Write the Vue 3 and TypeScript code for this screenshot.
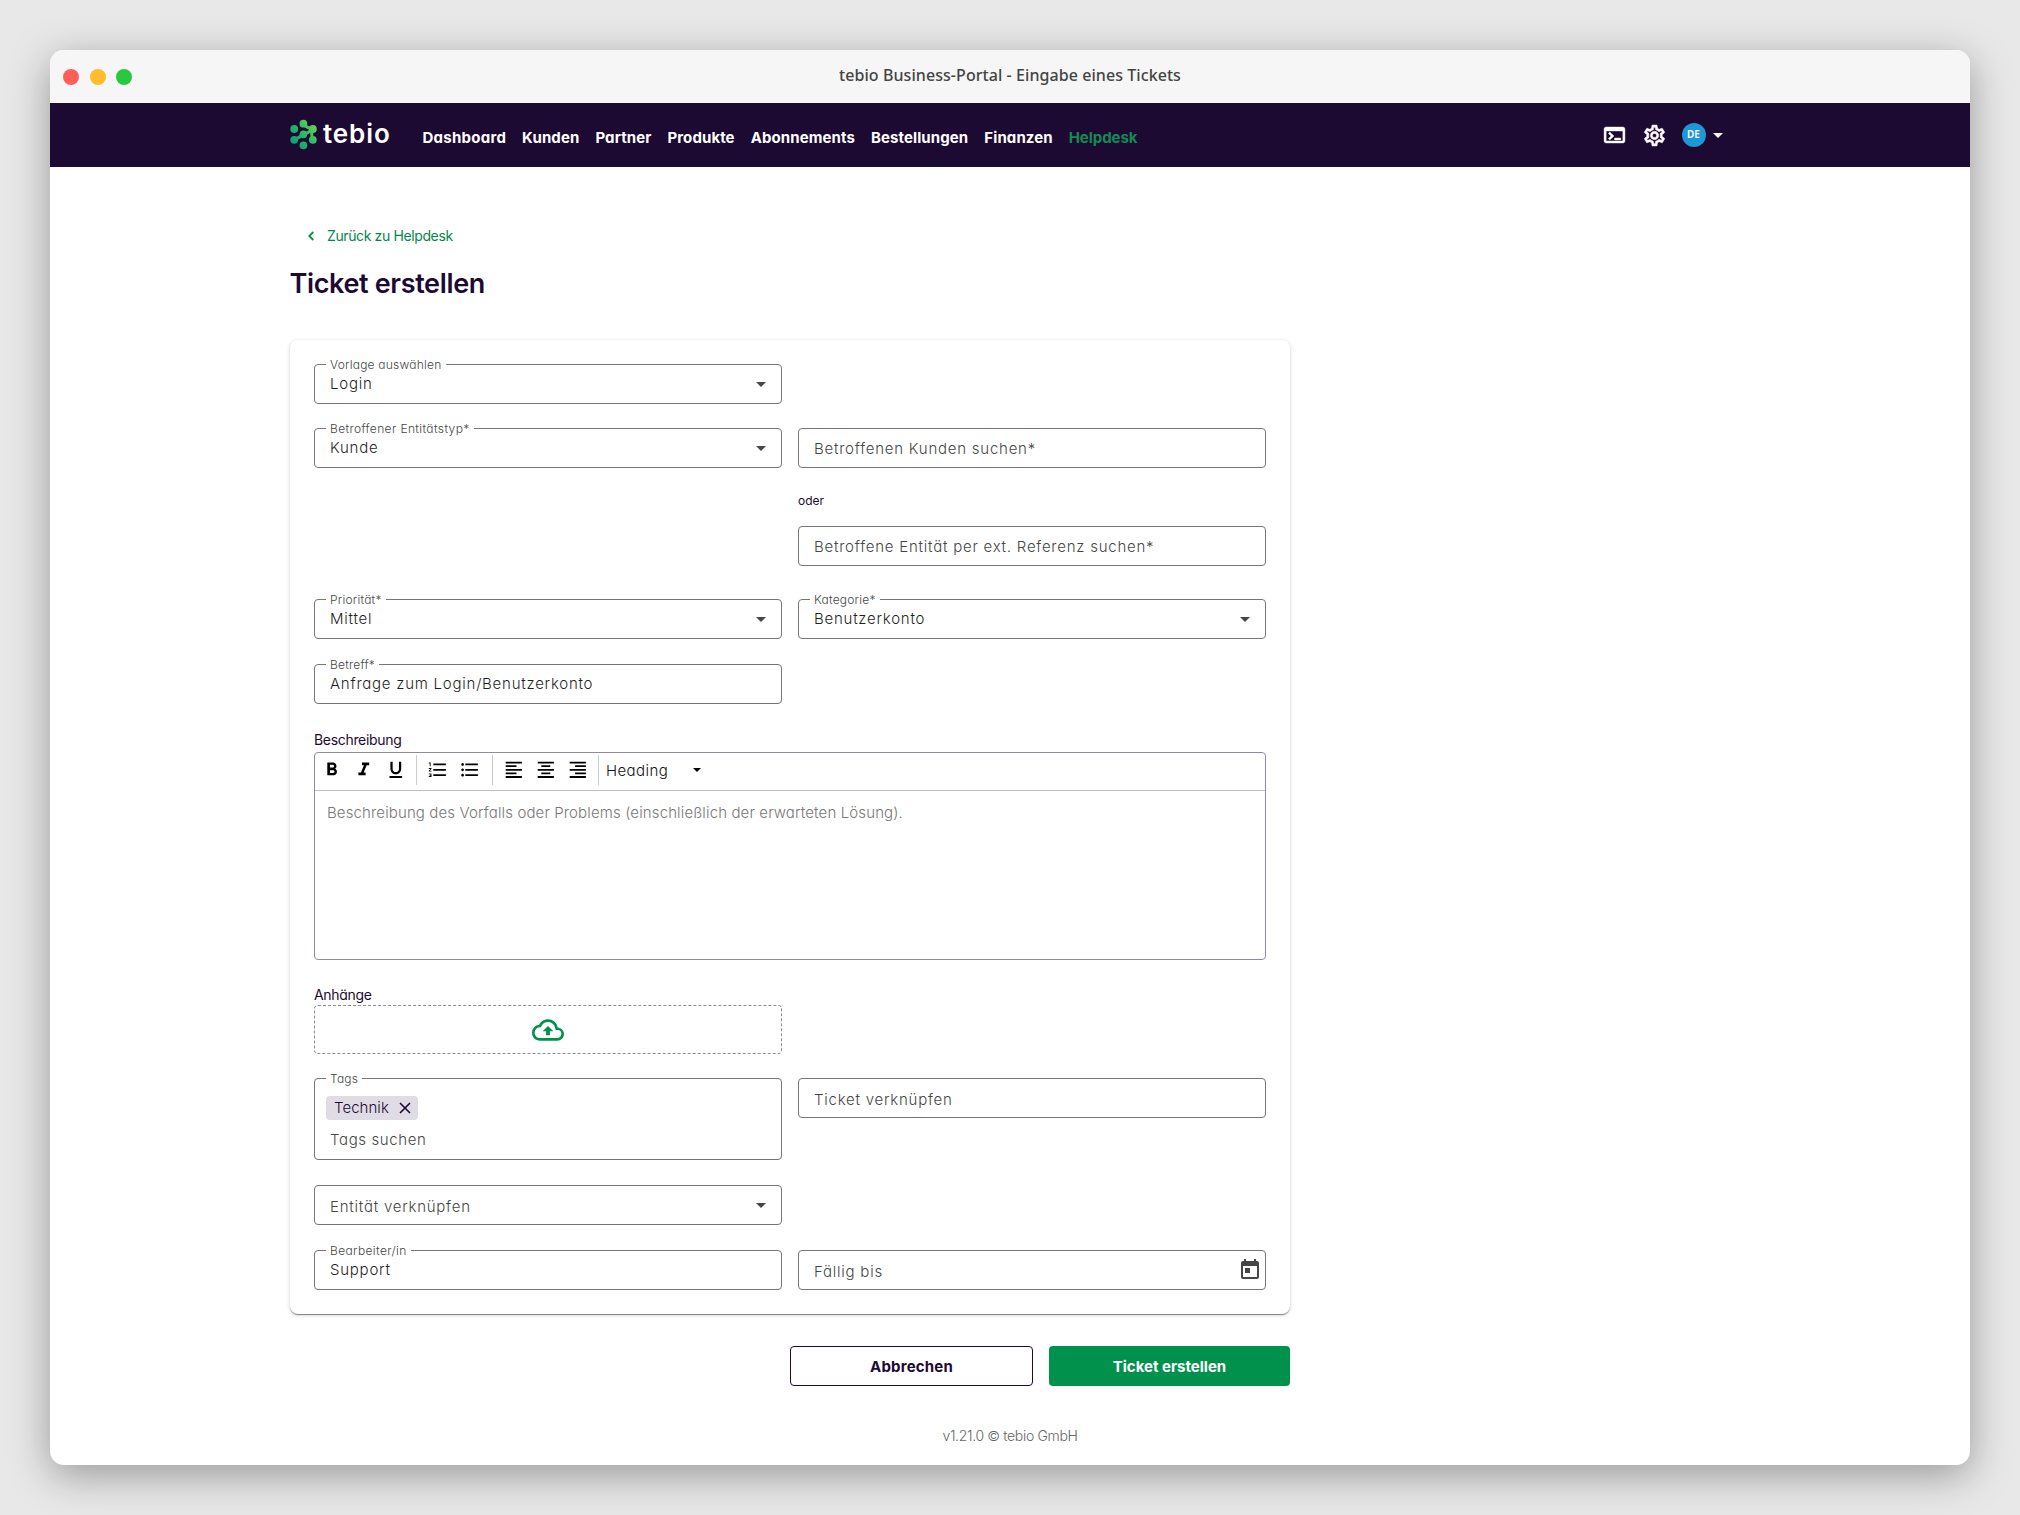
<script setup lang="ts">
import { ref } from 'vue'

interface NavItem {
  label: string
  active?: boolean
}

interface Tool {
  name: string
  path: string
}

const navItems: NavItem[] = [
  { label: 'Dashboard' },
  { label: 'Kunden' },
  { label: 'Partner' },
  { label: 'Produkte' },
  { label: 'Abonnements' },
  { label: 'Bestellungen' },
  { label: 'Finanzen' },
  { label: 'Helpdesk', active: true },
]

const toolGroups: Tool[][] = [
  [
    { name: 'Fett', path: 'M15.6 10.79c.97-.67 1.65-1.77 1.65-2.79 0-2.26-1.75-4-4-4H7v14h7.04c2.09 0 3.71-1.7 3.71-3.79 0-1.52-.86-2.82-2.15-3.42zM10 6.5h3c.83 0 1.5.67 1.5 1.5s-.67 1.5-1.5 1.5h-3v-3zm3.5 9H10v-3h3.5c.83 0 1.5.67 1.5 1.5s-.67 1.5-1.5 1.5z' },
    { name: 'Kursiv', path: 'M10 4v3h2.21l-3.42 8H6v3h8v-3h-2.21l3.42-8H18V4z' },
    { name: 'Unterstrichen', path: 'M12 17c3.31 0 6-2.69 6-6V3h-2.5v8c0 1.93-1.57 3.5-3.5 3.5S8.5 12.93 8.5 11V3H6v8c0 3.31 2.69 6 6 6zm-7 2v2h14v-2H5z' },
  ],
  [
    { name: 'Nummerierte Liste', path: 'M2 17h2v.5H3v1h1v.5H2v1h3v-4H2v1zm1-9h1V4H2v1h1v3zm-1 3h1.8L2 13.1v.9h3v-1H3.2L5 10.9V10H2v1zm5-6v2h14V5H7zm0 14h14v-2H7v2zm0-6h14v-2H7v2z' },
    { name: 'Aufzählung', path: 'M4 10.5c-.83 0-1.5.67-1.5 1.5s.67 1.5 1.5 1.5 1.5-.67 1.5-1.5-.67-1.5-1.5-1.5zm0-6c-.83 0-1.5.67-1.5 1.5S3.17 7.5 4 7.5 5.5 6.83 5.5 6 4.83 4.5 4 4.5zm0 12c-.83 0-1.5.68-1.5 1.5s.68 1.5 1.5 1.5 1.5-.68 1.5-1.5-.67-1.5-1.5-1.5zM7 19h14v-2H7v2zm0-6h14v-2H7v2zm0-8v2h14V5H7z' },
  ],
  [
    { name: 'Linksbündig', path: 'M15 15H3v2h12v-2zm0-8H3v2h12V7zM3 13h18v-2H3v2zm0 8h18v-2H3v2zM3 3v2h18V3H3z' },
    { name: 'Zentriert', path: 'M7 15v2h10v-2H7zm-4 6h18v-2H3v2zm0-8h18v-2H3v2zm4-6v2h10V7H7zM3 3v2h18V3H3z' },
    { name: 'Rechtsbündig', path: 'M3 21h18v-2H3v2zm6-4h12v-2H9v2zm-6-4h18v-2H3v2zm6-4h12V7H9v2zM3 3v2h18V3H3z' },
  ],
]

const template = ref('Login')
const entityType = ref('Kunde')
const priority = ref('Mittel')
const category = ref('Benutzerkonto')
const subject = ref('Anfrage zum Login/Benutzerkonto')
const assignee = ref('Support')
const tags = ref<string[]>(['Technik'])

function removeTag(tag: string): void {
  tags.value = tags.value.filter((t) => t !== tag)
}
</script>

<template>
  <div class="stage">
    <div class="window">
      <div class="titlebar">
        <div class="lights">
          <i class="light red"></i>
          <i class="light yellow"></i>
          <i class="light green"></i>
        </div>
        <span class="window-title">tebio Business-Portal - Eingabe eines Tickets</span>
      </div>

      <header class="topbar">
        <div class="brand">
          <svg class="molecule" viewBox="0 0 28 31" width="28" height="31">
            <defs>
              <linearGradient id="mol" x1="2" y1="24" x2="25" y2="6" gradientUnits="userSpaceOnUse">
                <stop offset="0" stop-color="#0a9f73" />
                <stop offset="0.5" stop-color="#27b867" />
                <stop offset="1" stop-color="#6cd050" />
              </linearGradient>
            </defs>
            <g fill="url(#mol)">
              <circle cx="13.4" cy="4.7" r="3.9" />
              <circle cx="4.2" cy="10" r="3.9" />
              <circle cx="22.8" cy="10" r="4" />
              <circle cx="4.2" cy="20.8" r="3.9" />
              <circle cx="13.4" cy="15.4" r="3.8" />
              <circle cx="22.8" cy="20.8" r="3.9" />
              <circle cx="13.4" cy="26.3" r="3.9" />
            </g>
            <g fill="none" stroke="url(#mol)" stroke-width="3">
              <path d="M14 5.5Q17.5 9.3 22 10M22.8 10Q20.6 15.5 22.8 20.5M4.5 20.5Q9 19 13 15.5M13.4 15.2Q18 14.5 22 10.5" />
            </g>
          </svg>
          <span class="wordmark">tebio</span>
        </div>
        <nav class="nav">
          <a v-for="item in navItems" :key="item.label" class="nav-link" :class="{ active: item.active }">{{ item.label }}</a>
        </nav>
        <div class="actions">
          <svg class="terminal" viewBox="0 0 24 24" width="25" height="24" preserveAspectRatio="none" fill="#fff" stroke="#fff" stroke-width="0.4">
            <path d="M20 4H4c-1.11 0-2 .9-2 2v12c0 1.1.89 2 2 2h16c1.1 0 2-.9 2-2V6c0-1.1-.89-2-2-2zm0 14H4V8h16v10zm-2-1h-6v-2h6v2zM7.5 17l-1.41-1.41L8.67 13l-2.59-2.59L7.5 9l4 4-4 4z" />
          </svg>
          <svg class="gear" viewBox="0 0 24 24" width="25" height="25" fill="#fff" stroke="#fff" stroke-width="0.5">
            <path d="M19.43 12.98c.04-.32.07-.64.07-.98 0-.34-.03-.66-.07-.98l2.11-1.65c.19-.15.24-.42.12-.64l-2-3.46a.5.5 0 0 0-.61-.22l-2.49 1c-.52-.4-1.08-.73-1.69-.98l-.38-2.65A.488.488 0 0 0 14 2h-4c-.25 0-.46.18-.49.42l-.38 2.65c-.61.25-1.17.59-1.69.98l-2.49-1a.5.5 0 0 0-.61.22l-2 3.46c-.13.22-.07.49.12.64l2.11 1.65c-.04.32-.07.65-.07.98 0 .33.03.66.07.98l-2.11 1.65c-.19.15-.24.42-.12.64l2 3.46a.5.5 0 0 0 .61.22l2.49-1c.52.4 1.08.73 1.69.98l.38 2.65c.03.24.24.42.49.42h4c.25 0 .46-.18.49-.42l.38-2.65c.61-.25 1.17-.59 1.69-.98l2.49 1a.5.5 0 0 0 .61-.22l2-3.46c.12-.22.07-.49-.12-.64l-2.11-1.65zm-1.98-1.71c.04.31.05.52.05.73 0 .21-.02.43-.05.73l-.14 1.13.89.7 1.08.84-.7 1.21-1.27-.51-1.04-.42-.9.68c-.43.32-.84.56-1.25.73l-1.06.43-.16 1.13-.2 1.35h-1.4l-.19-1.35-.16-1.13-1.06-.43c-.43-.18-.83-.41-1.23-.71l-.91-.7-1.06.43-1.27.51-.7-1.21 1.08-.84.89-.7-.14-1.13c-.03-.31-.05-.54-.05-.74s.02-.43.05-.73l.14-1.13-.89-.7-1.08-.84.7-1.21 1.27.51 1.04.42.9-.68c.43-.32.84-.56 1.25-.73l1.06-.43.16-1.13.2-1.35h1.39l.19 1.35.16 1.13 1.06.43c.43.18.83.41 1.23.71l.91.7 1.06-.43 1.27-.51.7 1.21-1.07.85-.89.7.14 1.13zM12 8c-2.21 0-4 1.79-4 4s1.79 4 4 4 4-1.79 4-4-1.79-4-4-4zm0 6c-1.1 0-2-.9-2-2s.9-2 2-2 2 .9 2 2-.9 2-2 2z" />
          </svg>
          <span class="avatar">DE</span>
          <i class="caret light-caret"></i>
        </div>
      </header>

      <main class="content">
        <a class="back">
          <svg viewBox="0 0 8 12" width="8" height="12"><path d="M6.3 2L2.3 6l4 4" fill="none" stroke="#00914d" stroke-width="1.8" /></svg>
          <span>Zurück zu Helpdesk</span>
        </a>
        <h1 class="heading">Ticket erstellen</h1>

        <form class="card">
          <div class="row">
            <div class="field floating">
              <span class="label">Vorlage auswählen</span>
              <span class="value">{{ template }}</span>
              <i class="caret"></i>
            </div>
          </div>

          <div class="row r-24">
            <div class="field floating">
              <span class="label label-wide">Betroffener Entitätstyp*</span>
              <span class="value">{{ entityType }}</span>
              <i class="caret"></i>
            </div>
            <div class="stack">
              <div class="field"><span class="placeholder">Betroffenen Kunden suchen*</span></div>
              <span class="or">oder</span>
              <div class="field"><span class="placeholder">Betroffene Entität per ext. Referenz suchen*</span></div>
            </div>
          </div>

          <div class="row r-33">
            <div class="field floating">
              <span class="label">Priorität*</span>
              <span class="value">{{ priority }}</span>
              <i class="caret"></i>
            </div>
            <div class="field floating">
              <span class="label">Kategorie*</span>
              <span class="value">{{ category }}</span>
              <i class="caret"></i>
            </div>
          </div>

          <div class="row r-25">
            <div class="field floating">
              <span class="label">Betreff*</span>
              <span class="value">{{ subject }}</span>
            </div>
          </div>

          <div class="caption caption-desc">Beschreibung</div>
          <div class="editor">
            <div class="toolbar">
              <div v-for="(group, g) in toolGroups" :key="g" class="tool-group" :class="'tool-group-' + g">
                <span v-for="tool in group" :key="tool.name" class="tool" :title="tool.name">
                  <svg viewBox="0 0 24 24" width="21.6" height="21.6"><path :d="tool.path" /></svg>
                </span>
              </div>
              <span class="heading-select">Heading</span>
              <i class="caret dark-caret"></i>
            </div>
            <div class="editor-body">Beschreibung des Vorfalls oder Problems (einschließlich der erwarteten Lösung).</div>
          </div>

          <div class="caption caption-files">Anhänge</div>
          <div class="row">
            <div class="dropzone">
              <svg viewBox="0 0 24 24" width="32" height="32" fill="#00914d">
                <path d="M19.35 10.04A7.49 7.49 0 0 0 12 4C9.11 4 6.6 5.64 5.35 8.04A5.994 5.994 0 0 0 0 14c0 3.31 2.69 6 6 6h13c2.76 0 5-2.24 5-5 0-2.64-2.05-4.78-4.65-4.96zM19 18H6c-2.21 0-4-1.79-4-4 0-2.05 1.53-3.76 3.56-3.97l1.07-.11.5-.95A5.469 5.469 0 0 1 12 6c2.62 0 4.88 1.86 5.39 4.43l.3 1.5 1.53.11A2.98 2.98 0 0 1 22 15c0 1.65-1.35 3-3 3zM8 13h2.55v3h2.9v-3H16l-4-4-4 4z" />
              </svg>
            </div>
          </div>

          <div class="row r-24">
            <div class="field floating tags">
              <span class="label">Tags</span>
              <span v-for="tag in tags" :key="tag" class="chip">
                {{ tag }}
                <svg viewBox="0 0 12 12" width="12" height="12" @click="removeTag(tag)"><path d="M1 1l10 10M11 1L1 11" fill="none" stroke="#1d0a33" stroke-width="1.6" /></svg>
              </span>
              <span class="placeholder">Tags suchen</span>
            </div>
            <div class="field lower"><span class="placeholder">Ticket verknüpfen</span></div>
          </div>

          <div class="row r-25">
            <div class="field lower">
              <span class="placeholder">Entität verknüpfen</span>
              <i class="caret"></i>
            </div>
          </div>

          <div class="row r-25">
            <div class="field floating">
              <span class="label label-wide">Bearbeiter/in</span>
              <span class="value">{{ assignee }}</span>
            </div>
            <div class="field date lower">
              <span class="placeholder">Fällig bis</span>
              <svg viewBox="0 0 24 24" width="24" height="24" fill="#444746">
                <path d="M19 3h-1V1h-2v2H8V1H6v2H5c-1.11 0-1.99.9-1.99 2L3 19a2 2 0 0 0 2 2h14c1.1 0 2-.9 2-2V5c0-1.1-.9-2-2-2zm0 16H5V8h14v11zM7 10h5v5H7z" />
              </svg>
            </div>
          </div>
        </form>

        <div class="buttons">
          <button type="button" class="btn cancel">Abbrechen</button>
          <button type="button" class="btn submit">Ticket erstellen</button>
        </div>
      </main>

      <footer class="footer">v1.21.0 © tebio GmbH</footer>
    </div>
  </div>
</template>

<style>
body {
  margin: 0;
  background: #e8e8e8;
}
</style>

<style scoped>
.stage {
  box-sizing: border-box;
  height: 1515px;
  padding: 50px;
  overflow: hidden;
  background: #e8e8e8;
  font-family: Inter, 'Liberation Sans', sans-serif;
  font-feature-settings: 'cv11';
  font-size: 15px;
  font-weight: 350;
  color: #1d0a33;
}
.window {
  display: flex;
  flex-direction: column;
  height: 1415px;
  border-radius: 14px;
  background: #fff;
  box-shadow: 0 10px 40px rgba(0, 0, 0, 0.34);
}
.titlebar {
  display: grid;
  grid-template-columns: 1fr auto 1fr;
  align-items: center;
  height: 53px;
  border-radius: 14px 14px 0 0;
  background: #f6f6f6;
}
.lights {
  display: flex;
  gap: 10.5px;
  padding-left: 13px;
}
.light {
  width: 16px;
  height: 16px;
  border-radius: 50%;
}
.red { background: #ff5f57; }
.yellow { background: #febc2e; }
.green { background: #28c840; }
.window-title {
  padding-bottom: 4px;
  font: 500 16px/24px 'Noto Sans', sans-serif;
  letter-spacing: 0.07px;
  color: #444;
}

.topbar {
  display: flex;
  align-items: center;
  box-sizing: border-box;
  height: 64px;
  padding: 0 247px 0 240px;
  background: #1d0a33;
  color: #fff;
}
.brand {
  display: flex;
  align-items: center;
  width: 132.5px;
  gap: 5px;
}
.molecule { margin-top: -1px; }
.wordmark {
  margin-bottom: 2px;
  font-size: 26px;
  font-weight: 600;
  line-height: 32px;
  letter-spacing: 0.9px;
}
.nav {
  display: flex;
  gap: 16px;
  padding-top: 5px;
  font-weight: 700;
  line-height: 20px;
  letter-spacing: 0.1px;
}
.nav-link:first-child { letter-spacing: 0.25px; }
.nav-link.active {
  letter-spacing: -0.05px;
  color: #0f8d50;
}
.actions {
  display: flex;
  align-items: center;
  margin-left: auto;
}
.gear { margin-left: 15px; }
.avatar {
  width: 24px;
  height: 24px;
  margin-left: 15px;
  border-radius: 50%;
  background: #1f97d4;
  font: 600 10px/23px 'Noto Sans', sans-serif;
  text-align: center;
}
.caret {
  width: 0;
  height: 0;
  border: 5px solid transparent;
  border-top-color: #444746;
  border-bottom-width: 0;
}
.light-caret {
  margin-left: 7.5px;
  border-top-color: #fff;
}

.content {
  width: 1000px;
  margin-left: 240px;
  padding-top: 59px;
}
.back {
  display: flex;
  align-items: center;
  gap: 12px;
  padding-left: 17px;
  font-size: 14px;
  font-weight: 400;
  line-height: 20px;
  letter-spacing: -0.38px;
  color: #00884a;
}
.heading {
  margin: 21px 0 39px -0.5px;
  font-size: 27px;
  font-weight: 600;
  line-height: 34px;
  letter-spacing: -0.35px;
}

.card {
  box-sizing: border-box;
  height: 974px;
  padding: 24px;
  border-radius: 8px;
  background: #fff;
  box-shadow: 0 2px 1px -1px rgba(0, 0, 0, 0.3), 0 1px 1px rgba(0, 0, 0, 0.2), 0 1px 4px rgba(0, 0, 0, 0.16);
}
.row {
  display: grid;
  grid-template-columns: 468px 468px;
  align-items: start;
  gap: 16px;
}
.r-24 { margin-top: 24px; }
.r-25 { margin-top: 25px; }
.r-33 { margin-top: 33px; }
.stack {
  display: flex;
  flex-direction: column;
}
.or {
  margin: 23px 0 15px;
  font-size: 12px;
  font-weight: 400;
  line-height: 20px;
}
.field {
  position: relative;
  display: flex;
  align-items: center;
  justify-content: space-between;
  box-sizing: border-box;
  height: 40px;
  padding: 0 15px;
  border: 1px solid #747775;
  border-radius: 4px;
  line-height: 24px;
  letter-spacing: 0.76px;
}
.value { color: #1f1f1f; }
.placeholder {
  padding-top: 2px;
  color: #444746;
}
.lower .placeholder { padding-top: 3px; }
.label {
  position: absolute;
  top: -9px;
  left: 11px;
  padding: 0 4px;
  background: #fff;
  font-size: 12px;
  line-height: 18px;
  letter-spacing: 0.22px;
  color: #444746;
}
.label-wide { letter-spacing: 0.38px; }
.date { padding-right: 3px; }
.date svg { margin-top: -1px; }

.caption {
  font-size: 14px;
  font-weight: 400;
  line-height: 20px;
  letter-spacing: -0.32px;
}
.caption-desc { margin: 26px 0 2px; }
.caption-files { margin-top: 25px; }

.editor {
  box-sizing: border-box;
  height: 208px;
  border: 1px solid #8e89a6;
  border-radius: 4px;
}
.toolbar {
  display: flex;
  align-items: center;
  box-sizing: border-box;
  height: 38px;
  padding: 0 0 3px 1px;
  border-bottom: 1px solid #bdbdbd;
}
.tool-group {
  display: flex;
  align-items: center;
  height: 30px;
  margin-right: 5px;
  border-right: 1px solid #ccc;
}
.tool-group-0,
.tool-group-2 { padding-right: 5px; }
.tool-group-1 { padding-right: 6px; }
.tool-group-2 { margin-right: 6.5px; }
.tool {
  display: flex;
  justify-content: center;
  width: 31.8px;
}
.heading-select {
  width: 87px;
  color: #111;
  letter-spacing: 0.45px;
}
.dark-caret {
  border-width: 4px 4px 0;
  border-top-color: #000;
}
.editor-body {
  padding: 9px 12px;
  line-height: 26px;
  letter-spacing: 0.13px;
  color: #777;
}

.dropzone {
  display: flex;
  align-items: center;
  justify-content: center;
  box-sizing: border-box;
  height: 49px;
  border: 1px dashed #8e89a6;
  border-radius: 4px;
}

.tags {
  flex-direction: column;
  align-items: flex-start;
  justify-content: flex-start;
  height: 82px;
  padding-top: 17px;
}
.chip {
  display: flex;
  align-items: center;
  gap: 10px;
  height: 24px;
  margin-left: -4px;
  padding: 0 7px 0 8px;
  border-radius: 4px;
  background: #dfdce6;
  letter-spacing: 0.05px;
}
.tags .placeholder {
  padding-top: 8px;
  letter-spacing: 0.62px;
}

.buttons {
  display: flex;
  justify-content: flex-end;
  gap: 16px;
  margin-top: 32px;
}
.btn {
  box-sizing: border-box;
  height: 40px;
  padding: 2px 0 0;
  border-radius: 4px;
  font: 700 15px/20px Inter, sans-serif;
  font-feature-settings: 'cv11';
}
.cancel {
  width: 243px;
  border: 1px solid #1d0a33;
  background: #fff;
  color: #1d0a33;
  letter-spacing: 0.2px;
}
.submit {
  width: 241px;
  border: 0;
  background: #00914d;
  color: #fff;
}
.footer {
  margin-top: 40px;
  font-size: 14px;
  line-height: 20px;
  letter-spacing: -0.34px;
  text-align: center;
  color: #666;
}
</style>
